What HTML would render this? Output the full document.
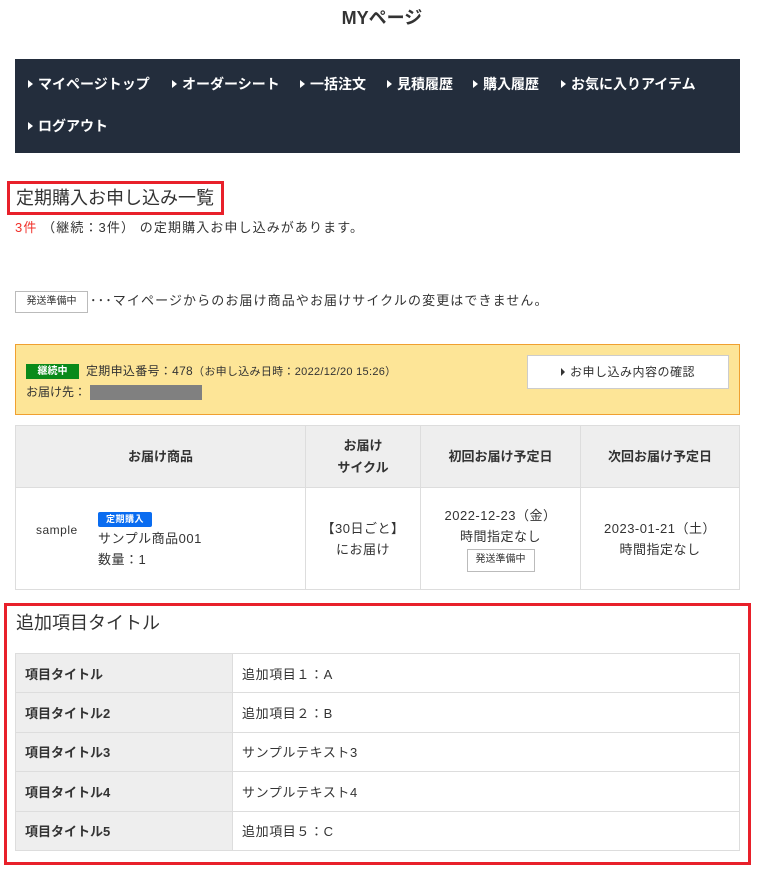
<!DOCTYPE html>
<html><head><meta charset="utf-8"><style>
*{margin:0;padding:0;box-sizing:border-box}
body{width:764px;height:878px;background:#fff;font-family:"Liberation Sans","Noto Sans CJK JP",sans-serif;color:#333;position:relative;font-size:13px}
.a{position:absolute;white-space:nowrap}
.nav{position:absolute;left:15px;top:59px;width:725px;height:94px;background:#232d3c}
.nav span{position:absolute;color:#fff;font-weight:bold;font-size:14px;line-height:20px}
.nav span:before{content:"";display:inline-block;border-left:5px solid #fff;border-top:4px solid transparent;border-bottom:4px solid transparent;margin-right:5px;vertical-align:1px}
table{border-collapse:collapse;position:absolute}
td,th{border:1px solid #ddd}
.t1 th{background:#eee;font-size:13px;font-weight:bold;text-align:center;line-height:22px}
.t1 td{text-align:center;font-size:13px;line-height:21px;letter-spacing:0.5px}
.t2 td{height:39.4px;font-size:13px;padding-left:9px;letter-spacing:0.6px}
.t2 td.h{background:#eee;font-weight:bold;letter-spacing:0}
.badge{display:inline-block;border:1px solid #bbb;background:#fff;font-size:10px;line-height:19px;padding:0 8px}
</style></head><body>
<div class="a" style="left:0;width:764px;top:7px;text-align:center;font-size:18px;font-weight:bold;line-height:22px">MYページ</div>
<div class="nav">
<span style="left:13px;top:15px">マイページトップ</span>
<span style="left:157px;top:15px">オーダーシート</span>
<span style="left:285px;top:15px">一括注文</span>
<span style="left:372px;top:15px">見積履歴</span>
<span style="left:458px;top:15px">購入履歴</span>
<span style="left:546px;top:15px">お気に入りアイテム</span>
<span style="left:13px;top:57px">ログアウト</span>
</div>
<div class="a" style="left:7px;top:181px;width:217px;height:34px;border:3px solid #e8202a"></div>
<div class="a" style="left:16px;top:186px;font-size:18px;line-height:24px">定期購入お申し込み一覧</div>
<div class="a" style="left:15px;top:219px;font-size:13px;line-height:18px;letter-spacing:1.1px"><span style="color:#f0302a">3件</span> （継続：3件） の定期購入お申し込みがあります。</div>
<div class="a" style="left:15px;top:291px;height:22px;width:73px;border:1px solid #bbb;font-size:10px;line-height:20px;text-align:center">発送準備中</div>
<div class="a" style="left:90px;top:291px;font-size:13px;line-height:20px;letter-spacing:1.1px">･･･マイページからのお届け商品やお届けサイクルの変更はできません。</div>
<div class="a" style="left:15px;top:344px;width:725px;height:71px;background:#fde597;border:1px solid #f0a030"></div>
<div class="a" style="left:26px;top:364px;width:53px;height:15px;background:#0a8a1a;color:#fff;font-size:10px;font-weight:bold;text-align:center;line-height:15px">継続中</div>
<div class="a" style="left:86px;top:362px;font-size:12px;line-height:18px;letter-spacing:0.3px">定期申込番号：478<span style="font-size:11px">（お申し込み日時：2022/12/20 15:26）</span></div>
<div class="a" style="left:26px;top:383px;font-size:12px;line-height:18px">お届け先：</div>
<div class="a" style="left:90px;top:385px;width:112px;height:15px;background:#808080"></div>
<div class="a" style="left:527px;top:355px;width:202px;height:34px;background:#fff;border:1px solid #ccc;font-size:12px;line-height:32px;text-align:center;letter-spacing:0.5px"><span style="display:inline-block;border-left:4px solid #333;border-top:4px solid transparent;border-bottom:4px solid transparent;margin-right:5px"></span>お申し込み内容の確認</div>
<table class="t1" style="left:15px;top:425px;width:725px">
<tr style="height:62px"><th style="width:290px">お届け商品</th><th style="width:115px">お届け<br>サイクル</th><th style="width:160px">初回お届け予定日</th><th>次回お届け予定日</th></tr>
<tr style="height:102px"><td style="text-align:left;position:relative"><span class="a" style="left:20px;top:32px;font-size:12px">sample</span>
<div style="margin-left:82px;line-height:21px"><span style="display:inline-block;background:#0a6cf0;color:#fff;font-size:9px;font-weight:bold;line-height:15px;padding:0 8px;border-radius:2px">定期購入</span><br>サンプル商品001<br>数量：1</div></td>
<td>【30日ごと】<br>にお届け</td>
<td>2022-12-23（金）<br>時間指定なし<br><span class="badge" style="line-height:20px;height:23px;margin-top:1px;letter-spacing:0">発送準備中</span></td>
<td>2023-01-21（土）<br>時間指定なし</td></tr>
</table>
<div class="a" style="left:4px;top:603px;width:747px;height:262px;border:3px solid #e8202a"></div>
<div class="a" style="left:16px;top:611px;font-size:18px;line-height:24px">追加項目タイトル</div>
<table class="t2" style="left:15px;top:653px;width:725px">
<tr><td class="h" style="width:217px">項目タイトル</td><td>追加項目１：A</td></tr>
<tr><td class="h">項目タイトル2</td><td>追加項目２：B</td></tr>
<tr><td class="h">項目タイトル3</td><td>サンプルテキスト3</td></tr>
<tr><td class="h">項目タイトル4</td><td>サンプルテキスト4</td></tr>
<tr><td class="h">項目タイトル5</td><td>追加項目５：C</td></tr>
</table>
</body></html>
